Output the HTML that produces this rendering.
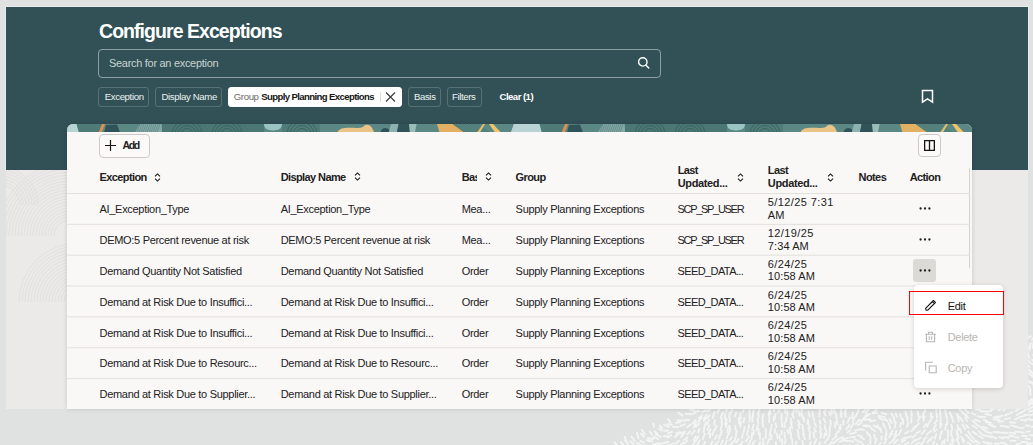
<!DOCTYPE html>
<html><head><meta charset="utf-8">
<style>
*{box-sizing:border-box;margin:0;padding:0}
html,body{width:1033px;height:445px;overflow:hidden;background:#e0e2e1;font-family:"Liberation Sans",sans-serif;position:relative}
.a{position:absolute}
.t{position:absolute;white-space:nowrap;line-height:1}
#teal{left:6px;top:7px;width:1022px;height:163px;background:#315156;box-shadow:0 0 0 1px rgba(255,255,255,.3)}
#light{left:6px;top:170px;width:1022px;height:239px;background:#ebeae8}
.title{left:99px;top:21.6px;font-size:19.5px;font-weight:bold;color:#fff;letter-spacing:-0.95px}
#search{left:98px;top:49px;width:563px;height:29px;border:1px solid rgba(255,255,255,.45);border-radius:4px}
.ph{left:109px;top:57.7px;font-size:11px;color:#c9d3d3;letter-spacing:-0.3px}
.chip{position:absolute;top:87px;height:20px;border:1px solid rgba(255,255,255,.18);border-radius:3px}
.ct{top:91.9px;font-size:9.6px;color:#edf1f1;letter-spacing:-0.35px}
#card{left:67px;top:123.5px;width:905px;height:285px;background:#f9f8f6;border-radius:6px 6px 0 0;overflow:hidden;box-shadow:0 0 5px rgba(0,0,0,.14)}
.btn{position:absolute;border:1px solid #cdcac6;border-radius:4px;background:#fbfaf9}
.h{font-size:11px;font-weight:bold;color:#22201d;letter-spacing:-0.6px}
.d{font-size:11px;color:#22201d;letter-spacing:-0.3px}
.sort{position:absolute;width:7px;height:9px}
.dots{position:absolute;width:12px;height:3px}
</style></head><body>
<div id="teal" class="a"></div>
<div id="light" class="a"></div>
<svg class="a" style="left:0;top:0" width="1033" height="445" viewBox="0 0 1033 445">
<defs><clipPath id="lc"><rect x="6" y="170" width="1022" height="239"/></clipPath><clipPath id="dc"><path d="M0 409H1033V445H0Z M1028 300H1033V409H1028Z"/></clipPath></defs>
<g clip-path="url(#dc)"><path d="M1028.3 406.4l2.9 -2.9M1032.5 403.7l1.8 -3.1M1036.2 406.6l4.6 -3.7M689.9 409.5l4.1 0.7M694.9 411.5l4.3 -0.8M702.2 411.8l4.3 -1.4M708.0 411.5l3.0 -3.8M717.5 412.4l2.0 -3.4M726.1 411.7l1.6 -4.0M731.2 412.4l1.1 -3.6M742.8 411.9l1.6 -4.6M749.2 411.7l1.0 -4.9M753.1 412.5l0.8 -4.6M758.0 413.7l1.7 -4.9M770.3 414.1l-0.1 -5.6M773.8 411.1l0.3 -3.7M778.3 412.7l2.0 -5.1M785.2 412.9l-0.2 -5.1M793.0 413.3l1.1 -3.9M796.3 412.3l1.5 -5.8M801.7 411.6l-0.1 -4.8M820.0 411.0l-0.6 -3.5M825.3 411.4l0.4 -3.6M832.2 413.2l-1.0 -3.6M834.8 412.6l-1.3 -4.0M841.6 413.9l-0.9 -5.5M845.2 413.6l0.7 -4.9M857.7 410.7l2.2 -3.0M862.7 412.0l2.7 -2.5M865.7 412.7l3.1 -3.5M873.0 412.4l3.5 -2.3M924.7 407.7l0.4 4.0M936.4 406.9l-0.2 4.7M940.3 406.9l-0.4 5.2M945.0 408.2l0.8 5.2M959.2 409.2l3.2 2.6M964.2 409.0l4.3 3.8M976.2 409.1l3.9 0.4M980.6 411.3l5.9 0.2M986.9 411.9l4.2 -1.0M991.3 409.9l4.4 -1.7M998.4 410.5l2.9 -2.0M1003.6 410.4l2.4 -2.7M1015.5 411.0l4.6 -2.7M1022.0 412.2l3.8 -2.4M1028.1 409.4l4.7 -2.6M1029.5 411.7l5.4 -1.8M1038.6 411.2l3.7 -0.9M678.2 412.5l4.1 3.2M685.8 413.9l4.8 0.4M690.1 414.2l5.6 -1.4M699.0 417.9l2.8 -2.2M704.0 418.8l2.6 -3.8M707.1 418.4l2.4 -3.2M712.6 417.9l1.9 -5.6M720.6 417.7l2.3 -5.2M725.0 418.9l-0.1 -4.7M729.3 417.3l0.4 -4.6M734.9 416.4l1.3 -4.1M740.8 418.8l-0.6 -5.6M749.8 418.7l-0.2 -5.8M752.6 417.5l0.8 -5.9M758.7 416.8l-0.6 -4.2M762.3 418.4l1.2 -4.0M769.1 416.4l-0.3 -4.8M774.5 419.6l1.0 -5.6M781.5 419.6l0.1 -5.9M787.3 415.9l0.1 -5.3M793.6 417.6l-1.3 -4.0M799.6 415.8l-0.7 -4.6M803.1 418.8l-1.8 -5.7M809.7 416.6l-1.2 -4.8M812.7 415.7l0.0 -4.0M819.4 416.8l0.1 -5.8M825.6 415.4l-1.7 -3.6M830.5 415.3l-1.3 -3.9M836.7 419.2l-0.9 -5.3M841.4 417.3l-0.5 -4.4M845.6 417.0l-0.8 -5.9M852.0 418.3l1.1 -5.6M856.1 416.0l1.9 -4.1M863.4 418.5l3.7 -4.3M864.7 417.4l4.9 -3.1M872.6 413.2l4.5 -0.4M878.4 416.0l5.9 0.9M881.7 412.8l4.6 1.5M891.4 413.7l2.8 4.3M895.6 413.6l1.6 3.2M900.0 414.3l1.9 4.7M905.6 411.5l0.8 5.0M911.2 410.9l0.5 4.8M917.6 411.4l1.0 4.9M923.9 412.0l-1.3 5.7M931.1 412.9l-0.1 4.1M936.6 413.7l0.5 4.2M940.3 413.4l0.3 4.5M946.1 414.8l1.2 3.9M949.8 412.3l2.1 4.8M956.8 414.0l2.8 3.8M962.2 412.5l4.4 3.4M965.7 414.3l2.4 3.5M971.6 413.0l3.7 1.6M977.8 416.3l3.7 1.0M981.4 417.0l3.9 -0.1M985.4 414.1l5.7 1.0M993.6 417.5l5.7 -1.1M997.3 417.8l4.9 -2.1M1005.1 415.4l4.1 -1.8M1008.8 414.0l3.7 -2.0M1016.8 415.0l5.1 -3.0M1019.7 417.0l5.4 -1.4M1024.5 415.0l4.4 -0.1M1030.1 415.6l5.2 -2.3M1036.5 416.9l5.2 -1.4M667.9 419.0l2.5 3.5M676.0 422.7l4.1 -0.5M677.8 420.3l5.3 0.3M683.9 420.5l5.0 -0.6M692.3 423.8l3.4 -3.9M698.2 421.5l3.2 -3.7M704.0 421.1l1.9 -3.6M707.3 424.4l1.6 -4.7M714.3 424.8l0.6 -4.7M721.8 424.1l-0.2 -6.0M725.0 424.4l1.8 -5.3M729.8 421.6l-0.2 -3.8M738.9 423.7l-0.0 -5.8M743.6 422.3l0.8 -4.1M749.5 421.4l0.6 -5.0M752.6 421.9l-0.4 -3.8M758.3 423.4l-0.6 -5.1M762.9 422.4l-0.6 -5.2M769.1 422.1l0.2 -5.5M773.7 421.1l0.1 -4.5M781.5 420.8l0.2 -3.9M785.9 421.8l0.5 -4.2M791.7 422.9l-0.9 -4.3M799.9 424.5l-1.8 -4.0M804.0 421.1l-0.2 -3.5M808.5 424.0l-0.6 -4.5M814.3 420.8l-1.0 -3.4M820.5 423.9l-0.9 -3.6M825.2 422.3l-1.5 -3.6M830.9 424.1l-0.6 -3.7M837.6 424.3l-0.7 -3.9M843.3 424.8l-0.0 -4.7M847.6 422.7l2.3 -5.3M852.8 421.7l2.1 -5.1M855.8 424.0l3.6 -4.3M860.4 421.5l3.9 -2.8M864.9 419.8l5.3 -0.6M870.0 421.2l5.3 -0.8M879.1 417.8l4.4 2.3M884.5 418.1l3.1 3.3M889.7 419.1l2.1 4.1M893.7 418.8l1.8 4.4M903.0 419.3l0.1 4.6M907.5 417.0l-0.2 3.8M911.5 417.9l-0.3 4.8M920.2 416.4l-2.4 4.8M924.7 416.4l-1.3 4.6M932.8 416.7l-3.1 4.7M937.0 420.1l-2.2 3.3M940.7 419.4l-0.5 5.8M947.1 420.4l0.1 3.7M951.6 416.4l1.8 5.5M957.8 416.7l1.0 4.7M960.0 417.6l2.8 3.9M965.2 417.5l1.9 3.4M972.8 420.7l2.8 2.7M975.1 419.6l4.7 2.0M983.7 419.7l4.5 2.1M985.9 422.0l5.0 0.9M993.7 419.5l6.0 0.2M998.2 421.9l4.6 -0.7M1004.8 419.4l5.4 -1.5M1010.1 422.3l5.0 0.4M1015.1 419.1l3.4 -1.1M1021.1 419.9l4.7 0.7M1024.6 420.1l4.9 -1.4M1030.1 420.0l3.8 -0.2M1035.9 421.0l5.0 -0.3M653.3 423.4l0.8 3.5M659.9 425.6l2.4 2.6M664.0 424.7l4.9 2.2M667.9 424.1l4.0 0.6M673.2 426.8l5.2 0.3M680.6 425.9l4.6 -1.7M686.9 427.2l3.5 -2.3M693.5 427.4l2.7 -5.0M695.5 426.7l4.1 -3.5M704.1 428.0l1.8 -5.4M707.5 430.0l1.9 -4.7M714.8 430.1l1.7 -4.4M720.7 429.7l1.2 -4.4M726.0 427.2l0.7 -4.0M730.1 429.6l-0.5 -3.8M735.6 429.9l-0.3 -4.3M740.3 426.8l0.7 -5.2M748.6 428.8l0.5 -3.6M752.2 429.9l1.5 -5.3M756.4 430.2l1.7 -5.5M763.3 426.7l-0.8 -3.7M771.0 429.8l0.7 -5.0M776.5 427.0l-1.0 -3.6M782.4 426.9l-0.7 -4.2M784.7 427.1l-0.2 -4.2M792.1 428.2l-1.3 -5.8M799.5 428.2l-1.2 -3.4M803.2 429.2l-0.9 -4.3M810.1 427.3l-2.9 -4.9M816.1 426.2l-1.6 -3.1M820.9 429.6l-0.8 -3.4M825.3 429.1l-0.6 -3.9M829.5 429.4l0.8 -4.1M835.1 427.5l0.2 -5.2M839.2 428.2l1.5 -3.4M846.4 429.3l2.8 -4.2M850.5 428.0l3.2 -4.8M857.9 425.2l3.4 -2.2M862.9 425.6l4.4 0.9M865.6 425.1l4.6 1.4M873.7 425.3l3.6 2.5M877.4 425.1l2.5 4.5M883.1 423.2l2.1 5.0M888.7 423.1l1.6 5.5M895.9 422.7l-1.3 5.1M900.9 422.6l-0.7 4.1M908.2 422.6l-1.3 4.1M916.4 425.8l-3.0 2.3M919.0 423.4l-4.2 4.2M926.2 424.2l-2.5 3.1M928.7 422.7l-1.5 4.2M935.8 424.9l-2.5 4.6M941.7 424.0l-1.3 3.6M946.0 424.1l-0.7 5.7M951.4 424.8l0.9 4.5M957.4 424.8l1.0 5.3M962.6 424.5l2.6 4.4M966.1 425.1l2.4 2.9M972.5 425.5l4.3 2.7M976.5 424.6l4.4 2.4M983.5 426.8l3.5 1.9M989.0 424.4l4.2 2.2M991.8 425.5l3.6 1.4M1000.9 425.8l3.7 0.6M1004.3 426.4l4.7 0.9M1011.2 425.4l4.3 1.4M1014.2 426.2l4.3 1.1M1019.3 428.1l4.4 -0.4M1025.8 425.5l3.5 0.3M1031.5 426.7l4.4 0.1M1035.5 426.5l5.8 0.9M641.9 429.8l2.7 4.4M649.6 431.5l2.3 2.8M654.6 431.5l3.0 2.4M659.2 428.4l2.7 2.3M664.2 430.6l3.8 -0.1M667.9 433.3l4.1 -1.4M676.2 433.3l3.7 -1.2M680.1 433.8l4.6 -2.3M687.2 434.3l2.8 -2.8M691.5 434.1l3.2 -3.3M698.2 432.5l1.1 -3.9M703.6 432.0l0.8 -4.6M708.4 433.7l2.1 -4.4M712.4 435.1l1.3 -4.5M720.8 435.0l0.8 -4.4M727.3 432.3l1.1 -5.0M728.6 434.3l2.0 -4.8M735.8 435.8l1.0 -4.7M743.6 432.2l1.0 -5.2M746.9 435.1l0.8 -4.3M753.3 434.6l0.6 -4.0M758.6 434.5l0.1 -5.6M765.9 433.5l-0.2 -4.8M769.5 435.9l1.0 -5.0M774.8 432.9l0.1 -4.2M781.5 434.4l0.1 -3.6M788.5 433.4l-1.0 -3.5M790.5 433.1l-0.9 -5.7M798.7 435.5l-1.1 -5.7M804.0 434.6l-1.1 -5.1M810.0 432.8l-1.5 -4.9M816.0 431.7l-1.8 -3.5M820.9 435.7l-0.6 -5.1M826.4 435.1l-0.2 -4.9M829.5 433.3l0.3 -4.3M835.7 434.8l1.8 -3.2M838.4 432.4l2.5 -4.9M847.3 432.4l2.8 -2.1M850.0 433.9l5.8 -1.3M855.2 430.7l4.9 -1.5M860.4 429.2l3.5 0.6M866.4 431.9l2.3 2.9M870.9 428.0l4.2 3.2M880.7 428.5l0.5 3.6M886.3 430.3l0.0 5.3M892.8 430.4l-2.7 3.8M896.4 430.9l-1.8 5.0M901.3 429.6l-2.4 5.0M908.4 431.4l-3.3 2.1M914.6 428.2l-3.2 3.0M919.9 431.2l-3.3 2.1M925.2 430.2l-3.5 3.7M931.2 430.7l-4.4 3.9M936.5 429.3l-2.5 2.6M942.1 430.8l-1.7 4.0M947.9 430.3l-0.0 5.0M951.4 430.8l-0.3 4.4M956.4 430.5l2.0 5.1M959.8 428.4l1.5 4.3M968.4 431.5l1.8 3.1M972.7 431.6l4.0 2.8M978.6 430.9l3.7 3.7M981.9 428.4l4.0 2.8M986.0 431.7l5.6 1.6M993.6 431.9l4.6 0.7M997.4 431.8l5.3 1.3M1002.1 432.5l5.4 0.5M1009.5 432.5l5.6 1.2M1015.4 431.8l4.0 0.1M1019.6 431.9l4.3 0.9M1026.2 431.7l3.9 -0.3M1034.1 430.7l3.7 0.7M1038.2 430.1l5.0 0.1M624.7 436.9l1.5 3.9M631.5 436.7l3.1 4.2M637.0 432.8l1.6 5.7M641.0 433.6l2.8 3.1M647.8 438.2l5.5 0.8M653.3 436.7l4.6 2.2M655.8 434.5l4.9 2.3M663.7 436.3l5.0 -0.2M667.6 437.3l3.6 -2.0M674.9 437.0l3.1 -2.7M681.1 437.1l3.3 -4.2M684.1 440.0l3.2 -2.5M693.6 440.2l1.8 -3.4M695.4 441.1l3.0 -4.8M702.8 439.0l2.0 -5.2M709.8 437.6l0.4 -4.0M714.9 438.9l1.9 -3.3M719.2 438.6l0.8 -3.8M726.8 438.2l1.2 -3.7M729.6 440.1l2.3 -3.0M734.6 441.1l1.3 -5.0M742.1 438.2l0.7 -4.1M745.8 441.4l3.4 -4.9M751.7 439.0l0.3 -5.7M760.0 439.1l-0.1 -5.9M765.9 438.3l-0.3 -3.8M771.2 439.1l0.3 -4.0M777.6 438.3l-0.8 -4.9M780.1 440.7l-0.7 -5.2M785.0 437.8l-0.5 -5.0M791.2 438.3l-0.2 -5.0M799.5 439.2l-1.4 -3.7M804.9 439.1l-2.0 -4.9M809.6 439.1l0.3 -5.6M814.3 437.9l-0.7 -5.7M820.5 438.0l0.9 -3.9M824.0 437.8l0.9 -4.3M827.7 439.2l1.7 -4.3M832.4 439.7l4.2 -3.7M838.8 438.8l4.0 -2.0M842.4 439.3l5.6 -1.7M850.2 437.5l4.8 -0.8M857.9 435.4l3.8 0.9M861.0 437.3l3.0 2.0M869.0 434.2l1.6 3.2M874.0 434.6l1.6 5.0M881.6 436.1l-0.3 3.6M885.9 435.0l-0.9 4.1M892.3 433.7l-3.3 3.7M896.6 435.1l-3.1 4.4M905.1 437.4l-3.6 2.6M911.0 436.3l-4.2 1.6M915.7 435.0l-3.2 2.6M920.7 437.8l-5.0 2.3M926.6 437.1l-2.6 2.5M932.5 437.0l-2.3 3.4M936.2 434.2l-1.4 4.6M940.5 435.3l-0.6 3.5M948.2 435.2l-0.6 5.8M951.7 435.9l2.1 5.3M956.5 433.7l2.1 4.8M961.2 436.7l3.0 4.1M966.0 434.6l4.1 4.2M971.4 436.2l2.6 2.7M979.0 436.0l3.6 2.2M982.8 435.0l3.6 1.1M987.1 436.0l4.1 1.2M991.3 436.1l5.2 2.2M999.4 436.9l3.7 1.5M1003.9 436.7l4.9 1.1M1009.3 435.5l4.0 0.8M1015.3 437.2l3.5 0.3M1022.0 435.7l4.9 0.6M1025.5 438.6l4.2 0.7M1029.8 435.2l5.7 0.2M1035.5 436.4l4.6 0.3M614.6 442.3l2.8 4.1M621.0 442.1l3.2 3.9M625.0 440.4l3.5 4.0M630.4 441.3l3.4 2.9M637.0 442.8l4.2 2.2M640.6 440.7l3.3 2.0M646.5 440.3l5.7 1.2M653.0 444.5l5.7 -1.3M658.1 444.9l3.2 -1.5M662.9 443.2l5.6 -1.4M669.1 445.8l4.1 -2.5M675.5 443.4l3.5 -2.7M679.5 446.1l3.7 -3.6M684.4 443.7l3.0 -3.4M691.5 446.4l3.5 -4.8M696.8 445.6l2.9 -5.3M703.2 445.5l1.9 -3.4M710.5 446.0l1.9 -4.4M714.5 445.1l4.1 -3.7M721.2 443.9l1.7 -3.5M725.2 444.3l1.6 -3.6M730.4 444.4l3.3 -2.9M736.2 442.5l2.7 -3.6M740.9 444.8l1.7 -3.1M748.4 445.2l1.9 -4.8M752.4 444.5l2.2 -3.5M758.1 446.7l2.1 -4.5M762.7 443.8l0.7 -5.4M767.4 443.4l1.9 -4.4M776.0 445.6l-0.1 -3.7M782.1 444.4l-0.0 -5.3M784.7 443.4l0.9 -3.6M792.5 444.2l-0.3 -4.6M795.1 446.5l1.3 -4.8M803.2 445.0l-0.8 -4.0M809.5 445.9l1.5 -4.0M814.3 444.0l2.0 -4.6M818.8 446.2l1.5 -3.8M824.5 443.0l2.7 -3.3M829.2 445.3l2.5 -3.2M833.3 443.3l4.4 -4.0M839.5 441.8l4.5 -1.8M844.7 440.5l3.8 0.5M850.0 441.0l3.9 0.9M854.7 439.3l4.5 2.6M861.1 441.8l2.0 3.1M870.5 438.7l-0.3 4.6M876.4 439.0l-1.3 4.2M880.9 442.9l-2.8 2.9M886.5 439.3l-2.0 4.2M894.1 439.7l-4.5 3.6M897.8 439.7l-3.6 3.5M905.6 439.8l-4.1 2.4M908.6 442.6l-4.0 1.9M914.9 440.2l-3.2 3.1M919.0 442.7l-3.6 2.3M924.0 441.2l-3.2 3.0M929.8 438.9l-2.2 3.7M934.3 441.4l-1.7 3.9M943.0 440.9l-1.7 5.4M944.9 439.8l-0.7 3.5M951.9 439.7l0.6 4.5M956.5 439.0l2.6 5.0M962.3 439.5l1.4 3.5M967.4 442.4l3.1 1.9M970.5 440.0l3.3 2.6M974.9 440.7l4.6 2.2M983.3 442.0l5.1 1.5M987.6 443.0l4.3 0.5M994.7 443.5l4.2 0.1M1000.6 442.8l3.6 0.3M1003.1 442.9l3.7 1.5M1010.4 440.6l5.2 0.4M1016.4 444.2l4.1 -0.8M1021.9 442.0l5.8 0.3M1027.0 444.3l5.0 -1.0M1030.0 443.8l4.5 -1.0M1038.9 442.4l4.6 -2.8M608.4 448.1l2.6 2.9M613.9 447.3l2.9 3.9M618.3 447.0l3.7 3.4M626.4 448.5l3.4 1.7M630.3 446.0l3.2 1.7M634.5 448.4l4.5 0.8M640.6 447.7l4.4 0.3M644.4 445.2l5.8 1.6M649.9 449.1l5.9 -0.5M656.3 448.9l4.2 -1.8M663.0 447.1l5.4 -2.0M669.5 451.3l4.0 -3.2M673.9 447.4l3.1 -1.8M681.8 448.4l3.1 -2.5M687.2 450.7l3.3 -2.1M693.0 450.7l2.7 -3.4M698.2 448.9l3.1 -3.1M702.2 451.0l2.5 -3.3M707.5 450.1l4.5 -3.2M714.7 451.1l3.9 -2.7M717.7 449.2l2.8 -4.1M724.8 447.8l4.0 -2.4M728.5 448.0l2.7 -3.8M735.7 447.7l4.5 -3.4M742.0 449.1l3.2 -2.7M746.6 449.3l2.9 -3.3M752.6 451.7l3.1 -4.9M756.9 449.9l2.5 -4.2M762.3 448.3l1.9 -3.9M770.1 451.9l3.5 -4.5M777.1 451.2l0.5 -5.5M781.1 450.5l1.2 -4.1M788.1 450.5l0.4 -5.1M791.3 451.3l0.2 -3.6M797.8 449.6l0.9 -3.6M802.0 450.5l1.0 -4.4M808.5 449.5l0.5 -3.8M814.4 449.7l2.3 -3.0M817.6 448.6l1.7 -4.5M823.4 449.5l3.1 -2.6M827.2 449.8l3.6 -3.4M833.4 446.6l4.6 -0.6M839.0 448.8l5.4 0.0M847.7 447.5l2.6 2.7M849.9 444.7l4.4 4.0M857.4 444.4l3.3 4.3M862.2 445.7l0.5 3.5M868.0 444.6l-0.3 5.3M877.6 446.1l-3.1 4.8M883.2 448.2l-3.0 2.5M887.1 447.7l-4.4 2.8M891.9 446.4l-4.9 2.2M899.2 444.5l-3.7 3.4M904.0 448.6l-3.6 1.2M909.9 445.9l-3.3 2.2M915.5 446.8l-2.2 3.0M918.4 447.8l-2.9 2.7M924.1 446.7l-1.9 4.0M932.3 445.9l-2.7 4.5M937.0 443.9l-0.3 4.3M939.8 446.8l1.4 5.3M944.1 446.7l1.2 5.1M950.4 444.0l2.1 5.2M957.3 447.0l2.4 2.8M959.3 448.2l4.1 2.8M965.0 445.8l3.3 3.3M971.6 446.4l2.9 2.0M976.6 444.5l3.4 3.1M980.2 445.8l5.0 1.5M987.1 447.4l3.9 1.3M992.6 450.1l6.0 -0.5M998.5 448.4l5.5 1.3M1004.8 448.7l4.4 -0.3M1010.3 449.5l5.8 0.0M1014.1 449.4l5.3 -0.7M1021.2 448.0l4.7 -1.2M1024.6 447.4l4.3 -0.1M1032.2 448.6l3.4 -2.3M1037.3 447.2l3.3 -1.3M1026.3 339.0l4.4 -2.8M1031.9 339.6l2.6 -3.0M1029.0 347.9l1.6 -4.9M1032.6 347.8l1.0 -5.8M1029.4 350.6l0.7 -5.5M1035.5 350.7l-0.8 -3.7M1029.4 357.9l-1.7 -5.4M1035.7 358.3l-2.5 -3.2M1030.6 363.5l-3.1 -4.0M1035.3 362.7l-3.2 -2.9M1029.4 367.0l-2.5 -2.6M1036.3 366.7l-3.9 -2.7M1031.6 372.0l-3.6 -2.9M1034.5 374.6l-4.0 -2.9M1032.9 376.8l-3.9 -3.2M1036.1 377.5l-2.9 -2.3M1030.2 383.1l-3.5 -4.2M1034.1 385.6l-2.6 -3.8M1030.5 390.6l-1.7 -4.6M1035.2 390.5l-1.4 -4.1M1030.5 395.2l-0.5 -5.3M1034.6 396.7l0.5 -4.2M1029.2 402.9l2.2 -4.1M1032.1 401.8l2.4 -5.3M1027.1 404.5l2.6 -3.9M1032.7 407.0l3.5 -2.7" stroke="#f3f4f3" stroke-width="1.9" stroke-linecap="round" fill="none"/></g>
<g fill="none" stroke="#dfdedb" stroke-width="0.9" opacity="0.8" clip-path="url(#lc)"><path d="M54 236A16 16 0 0 1 86 236"/><path d="M51 236A19 19 0 0 1 89 236"/><path d="M48 236A22 22 0 0 1 92 236"/><path d="M45 236A25 25 0 0 1 95 236"/><path d="M42 236A28 28 0 0 1 98 236"/><path d="M39 236A31 31 0 0 1 101 236"/><path d="M36 236A34 34 0 0 1 104 236"/><path d="M33 236A37 37 0 0 1 107 236"/><path d="M30 236A40 40 0 0 1 110 236"/><path d="M27 236A43 43 0 0 1 113 236"/><path d="M24 236A46 46 0 0 1 116 236"/><path d="M21 236A49 49 0 0 1 119 236"/><path d="M18 236A52 52 0 0 1 122 236"/><path d="M15 236A55 55 0 0 1 125 236"/><path d="M12 236A58 58 0 0 1 128 236"/><path d="M9 236A61 61 0 0 1 131 236"/><path d="M6 236A64 64 0 0 1 134 236"/><path d="M3 236A67 67 0 0 1 137 236"/><path d="M0 236A70 70 0 0 1 140 236"/><path d="M-3 236A73 73 0 0 1 143 236"/><path d="M64 302A14 14 0 0 1 92 302"/><path d="M61 302A17 17 0 0 1 95 302"/><path d="M58 302A20 20 0 0 1 98 302"/><path d="M55 302A23 23 0 0 1 101 302"/><path d="M52 302A26 26 0 0 1 104 302"/><path d="M49 302A29 29 0 0 1 107 302"/><path d="M46 302A32 32 0 0 1 110 302"/><path d="M43 302A35 35 0 0 1 113 302"/><path d="M40 302A38 38 0 0 1 116 302"/><path d="M37 302A41 41 0 0 1 119 302"/><path d="M34 302A44 44 0 0 1 122 302"/><path d="M31 302A47 47 0 0 1 125 302"/><path d="M28 302A50 50 0 0 1 128 302"/><path d="M25 302A53 53 0 0 1 131 302"/><path d="M22 302A56 56 0 0 1 134 302"/><path d="M19 302A59 59 0 0 1 137 302"/><path d="M-20 205A20 20 0 0 1 20 205"/><path d="M-23 205A23 23 0 0 1 23 205"/><path d="M-26 205A26 26 0 0 1 26 205"/><path d="M-29 205A29 29 0 0 1 29 205"/><path d="M-32 205A32 32 0 0 1 32 205"/><path d="M-35 205A35 35 0 0 1 35 205"/><path d="M-38 205A38 38 0 0 1 38 205"/></g></svg>
<div class="t title">Configure Exceptions</div>
<div id="search" class="a"></div>
<div class="t ph">Search for an exception</div>
<svg class="a" style="left:637px;top:56px" width="14" height="14" viewBox="0 0 14 14"><circle cx="5.8" cy="5.9" r="4.2" fill="none" stroke="#fff" stroke-width="1.4"/><line x1="8.8" y1="8.9" x2="11.8" y2="11.9" stroke="#fff" stroke-width="1.4" stroke-linecap="round"/></svg>
<div class="chip" style="left:98px;width:51px"></div>
<div class="t ct" style="left:104.7px">Exception</div>
<div class="chip" style="left:155px;width:67px"></div>
<div class="t ct" style="left:161.4px">Display Name</div>
<div class="chip" style="left:228px;width:174px;background:#fff;border-color:#fff"></div>
<div class="t ct" style="left:233.7px;color:#6f6c69">Group</div>
<div class="t ct" style="left:261.2px;color:#161513;font-weight:bold;letter-spacing:-0.62px">Supply Planning Exceptions</div>
<div class="a" style="left:379.5px;top:92px;width:1px;height:10px;background:#e2dfdb"></div>
<svg class="a" style="left:385px;top:92px" width="11" height="10" viewBox="0 0 11 10"><path d="M1 0.5L10 9.5M10 0.5L1 9.5" stroke="#3a3835" stroke-width="1.1"/></svg>
<div class="chip" style="left:408px;width:33px"></div>
<div class="t ct" style="left:413.9px">Basis</div>
<div class="chip" style="left:446.5px;width:35px"></div>
<div class="t ct" style="left:451.9px">Filters</div>
<div class="t ct" style="left:499.6px;color:#fff;font-weight:bold;letter-spacing:-0.55px">Clear (1)</div>
<svg class="a" style="left:921px;top:89px" width="13" height="15" viewBox="0 0 13 15"><path d="M1.5 1.5H11.5V13.2L6.5 9.8L1.5 13.2Z" fill="none" stroke="#fff" stroke-width="1.5" stroke-linejoin="miter"/></svg>
<div id="card" class="a"><svg class="a" style="left:0;top:0" width="905" height="8.5" viewBox="0 0 905 8.5"><g><rect x="0" y="0" width="463" height="8.5" fill="#5b8884"/><polygon points="-16,0 9.6,0 12,8.5 -19,8.5" fill="#b9d3d4"/><polygon points="447,0 472.6,0 475,8.5 444,8.5" fill="#b9d3d4"/><polygon points="9.6,0 35,0 31.7,8.5 12,8.5" fill="#4f7b77"/><polygon points="35,0 38,0 34.7,8.5 31.7,8.5" fill="#e58d4c"/><polygon points="37,8.5 39,1 50,0.5 53,8.5" fill="#30535a"/><polygon points="73,0 95,0 95,8.5 68,8.5" fill="#86a9a6"/><line x1="73" y1="0" x2="70" y2="8.5" stroke="#5d8985" stroke-width="0.8"/><line x1="75" y1="0" x2="72" y2="8.5" stroke="#5d8985" stroke-width="0.8"/><line x1="77" y1="0" x2="74" y2="8.5" stroke="#5d8985" stroke-width="0.8"/><line x1="79" y1="0" x2="76" y2="8.5" stroke="#5d8985" stroke-width="0.8"/><line x1="81" y1="0" x2="78" y2="8.5" stroke="#5d8985" stroke-width="0.8"/><line x1="83" y1="0" x2="80" y2="8.5" stroke="#5d8985" stroke-width="0.8"/><line x1="85" y1="0" x2="82" y2="8.5" stroke="#5d8985" stroke-width="0.8"/><line x1="87" y1="0" x2="84" y2="8.5" stroke="#5d8985" stroke-width="0.8"/><line x1="89" y1="0" x2="86" y2="8.5" stroke="#5d8985" stroke-width="0.8"/><line x1="91" y1="0" x2="88" y2="8.5" stroke="#5d8985" stroke-width="0.8"/><line x1="93" y1="0" x2="90" y2="8.5" stroke="#5d8985" stroke-width="0.8"/><rect x="95" y="0" width="102" height="8.5" fill="#4f7c78"/><line x1="95.0" y1="0" x2="95.8" y2="8.5" stroke="#45716d" stroke-width="0.6"/><line x1="96.6" y1="0" x2="97.4" y2="8.5" stroke="#45716d" stroke-width="0.6"/><line x1="98.2" y1="0" x2="99.0" y2="8.5" stroke="#45716d" stroke-width="0.6"/><line x1="99.8" y1="0" x2="100.6" y2="8.5" stroke="#45716d" stroke-width="0.6"/><line x1="101.4" y1="0" x2="102.2" y2="8.5" stroke="#45716d" stroke-width="0.6"/><line x1="103.0" y1="0" x2="103.8" y2="8.5" stroke="#45716d" stroke-width="0.6"/><line x1="104.6" y1="0" x2="105.4" y2="8.5" stroke="#45716d" stroke-width="0.6"/><line x1="106.2" y1="0" x2="107.0" y2="8.5" stroke="#45716d" stroke-width="0.6"/><line x1="107.8" y1="0" x2="108.6" y2="8.5" stroke="#45716d" stroke-width="0.6"/><line x1="109.4" y1="0" x2="110.2" y2="8.5" stroke="#45716d" stroke-width="0.6"/><line x1="111.0" y1="0" x2="111.8" y2="8.5" stroke="#45716d" stroke-width="0.6"/><line x1="112.6" y1="0" x2="113.4" y2="8.5" stroke="#45716d" stroke-width="0.6"/><line x1="114.2" y1="0" x2="115.0" y2="8.5" stroke="#45716d" stroke-width="0.6"/><line x1="115.8" y1="0" x2="116.6" y2="8.5" stroke="#45716d" stroke-width="0.6"/><line x1="117.4" y1="0" x2="118.2" y2="8.5" stroke="#45716d" stroke-width="0.6"/><line x1="119.0" y1="0" x2="119.8" y2="8.5" stroke="#45716d" stroke-width="0.6"/><line x1="120.6" y1="0" x2="121.4" y2="8.5" stroke="#45716d" stroke-width="0.6"/><line x1="122.2" y1="0" x2="123.0" y2="8.5" stroke="#45716d" stroke-width="0.6"/><line x1="123.8" y1="0" x2="124.6" y2="8.5" stroke="#45716d" stroke-width="0.6"/><line x1="125.4" y1="0" x2="126.2" y2="8.5" stroke="#45716d" stroke-width="0.6"/><line x1="127.0" y1="0" x2="127.8" y2="8.5" stroke="#45716d" stroke-width="0.6"/><line x1="128.6" y1="0" x2="129.4" y2="8.5" stroke="#45716d" stroke-width="0.6"/><line x1="130.2" y1="0" x2="131.0" y2="8.5" stroke="#45716d" stroke-width="0.6"/><line x1="131.8" y1="0" x2="132.6" y2="8.5" stroke="#45716d" stroke-width="0.6"/><line x1="133.4" y1="0" x2="134.2" y2="8.5" stroke="#45716d" stroke-width="0.6"/><line x1="135.0" y1="0" x2="135.8" y2="8.5" stroke="#45716d" stroke-width="0.6"/><line x1="136.6" y1="0" x2="137.4" y2="8.5" stroke="#45716d" stroke-width="0.6"/><line x1="138.2" y1="0" x2="139.0" y2="8.5" stroke="#45716d" stroke-width="0.6"/><line x1="139.8" y1="0" x2="140.6" y2="8.5" stroke="#45716d" stroke-width="0.6"/><line x1="141.4" y1="0" x2="142.2" y2="8.5" stroke="#45716d" stroke-width="0.6"/><line x1="143.0" y1="0" x2="143.8" y2="8.5" stroke="#45716d" stroke-width="0.6"/><line x1="144.6" y1="0" x2="145.4" y2="8.5" stroke="#45716d" stroke-width="0.6"/><line x1="146.2" y1="0" x2="147.0" y2="8.5" stroke="#45716d" stroke-width="0.6"/><line x1="147.8" y1="0" x2="148.6" y2="8.5" stroke="#45716d" stroke-width="0.6"/><line x1="149.4" y1="0" x2="150.2" y2="8.5" stroke="#45716d" stroke-width="0.6"/><line x1="151.0" y1="0" x2="151.8" y2="8.5" stroke="#45716d" stroke-width="0.6"/><line x1="152.6" y1="0" x2="153.4" y2="8.5" stroke="#45716d" stroke-width="0.6"/><line x1="154.2" y1="0" x2="155.0" y2="8.5" stroke="#45716d" stroke-width="0.6"/><line x1="155.8" y1="0" x2="156.6" y2="8.5" stroke="#45716d" stroke-width="0.6"/><line x1="157.4" y1="0" x2="158.2" y2="8.5" stroke="#45716d" stroke-width="0.6"/><line x1="159.0" y1="0" x2="159.8" y2="8.5" stroke="#45716d" stroke-width="0.6"/><line x1="160.6" y1="0" x2="161.4" y2="8.5" stroke="#45716d" stroke-width="0.6"/><line x1="162.2" y1="0" x2="163.0" y2="8.5" stroke="#45716d" stroke-width="0.6"/><line x1="163.8" y1="0" x2="164.6" y2="8.5" stroke="#45716d" stroke-width="0.6"/><line x1="165.4" y1="0" x2="166.2" y2="8.5" stroke="#45716d" stroke-width="0.6"/><line x1="167.0" y1="0" x2="167.8" y2="8.5" stroke="#45716d" stroke-width="0.6"/><line x1="168.6" y1="0" x2="169.4" y2="8.5" stroke="#45716d" stroke-width="0.6"/><line x1="170.2" y1="0" x2="171.0" y2="8.5" stroke="#45716d" stroke-width="0.6"/><line x1="171.8" y1="0" x2="172.6" y2="8.5" stroke="#45716d" stroke-width="0.6"/><line x1="173.4" y1="0" x2="174.2" y2="8.5" stroke="#45716d" stroke-width="0.6"/><line x1="175.0" y1="0" x2="175.8" y2="8.5" stroke="#45716d" stroke-width="0.6"/><line x1="176.6" y1="0" x2="177.4" y2="8.5" stroke="#45716d" stroke-width="0.6"/><line x1="178.2" y1="0" x2="179.0" y2="8.5" stroke="#45716d" stroke-width="0.6"/><line x1="179.8" y1="0" x2="180.6" y2="8.5" stroke="#45716d" stroke-width="0.6"/><line x1="181.4" y1="0" x2="182.2" y2="8.5" stroke="#45716d" stroke-width="0.6"/><line x1="183.0" y1="0" x2="183.8" y2="8.5" stroke="#45716d" stroke-width="0.6"/><line x1="184.6" y1="0" x2="185.4" y2="8.5" stroke="#45716d" stroke-width="0.6"/><line x1="186.2" y1="0" x2="187.0" y2="8.5" stroke="#45716d" stroke-width="0.6"/><line x1="187.8" y1="0" x2="188.6" y2="8.5" stroke="#45716d" stroke-width="0.6"/><line x1="189.4" y1="0" x2="190.2" y2="8.5" stroke="#45716d" stroke-width="0.6"/><line x1="191.0" y1="0" x2="191.8" y2="8.5" stroke="#45716d" stroke-width="0.6"/><line x1="192.6" y1="0" x2="193.4" y2="8.5" stroke="#45716d" stroke-width="0.6"/><line x1="194.2" y1="0" x2="195.0" y2="8.5" stroke="#45716d" stroke-width="0.6"/><line x1="195.8" y1="0" x2="196.6" y2="8.5" stroke="#45716d" stroke-width="0.6"/><line x1="215.0" y1="0" x2="215.8" y2="8.5" stroke="#45716d" stroke-width="0.6"/><line x1="216.6" y1="0" x2="217.4" y2="8.5" stroke="#45716d" stroke-width="0.6"/><line x1="218.2" y1="0" x2="219.0" y2="8.5" stroke="#45716d" stroke-width="0.6"/><line x1="219.8" y1="0" x2="220.6" y2="8.5" stroke="#45716d" stroke-width="0.6"/><line x1="221.4" y1="0" x2="222.2" y2="8.5" stroke="#45716d" stroke-width="0.6"/><line x1="223.0" y1="0" x2="223.8" y2="8.5" stroke="#45716d" stroke-width="0.6"/><line x1="224.6" y1="0" x2="225.4" y2="8.5" stroke="#45716d" stroke-width="0.6"/><line x1="226.2" y1="0" x2="227.0" y2="8.5" stroke="#45716d" stroke-width="0.6"/><line x1="227.8" y1="0" x2="228.6" y2="8.5" stroke="#45716d" stroke-width="0.6"/><line x1="229.4" y1="0" x2="230.2" y2="8.5" stroke="#45716d" stroke-width="0.6"/><line x1="231.0" y1="0" x2="231.8" y2="8.5" stroke="#45716d" stroke-width="0.6"/><line x1="232.6" y1="0" x2="233.4" y2="8.5" stroke="#45716d" stroke-width="0.6"/><line x1="234.2" y1="0" x2="235.0" y2="8.5" stroke="#45716d" stroke-width="0.6"/><line x1="235.8" y1="0" x2="236.6" y2="8.5" stroke="#45716d" stroke-width="0.6"/><line x1="237.4" y1="0" x2="238.2" y2="8.5" stroke="#45716d" stroke-width="0.6"/><line x1="239.0" y1="0" x2="239.8" y2="8.5" stroke="#45716d" stroke-width="0.6"/><line x1="240.6" y1="0" x2="241.4" y2="8.5" stroke="#45716d" stroke-width="0.6"/><line x1="242.2" y1="0" x2="243.0" y2="8.5" stroke="#45716d" stroke-width="0.6"/><line x1="243.8" y1="0" x2="244.6" y2="8.5" stroke="#45716d" stroke-width="0.6"/><line x1="245.4" y1="0" x2="246.2" y2="8.5" stroke="#45716d" stroke-width="0.6"/><line x1="247.0" y1="0" x2="247.8" y2="8.5" stroke="#45716d" stroke-width="0.6"/><line x1="248.6" y1="0" x2="249.4" y2="8.5" stroke="#45716d" stroke-width="0.6"/><line x1="250.2" y1="0" x2="251.0" y2="8.5" stroke="#45716d" stroke-width="0.6"/><line x1="251.8" y1="0" x2="252.6" y2="8.5" stroke="#45716d" stroke-width="0.6"/><path d="M114 10.5 A6 6 0 0 1 126 10.5" fill="none" stroke="#35605d" stroke-width="0.8"/><path d="M111 10.5 A9 9 0 0 1 129 10.5" fill="none" stroke="#35605d" stroke-width="0.8"/><path d="M108 10.5 A12 12 0 0 1 132 10.5" fill="none" stroke="#35605d" stroke-width="0.8"/><path d="M105 10.5 A15 15 0 0 1 135 10.5" fill="none" stroke="#35605d" stroke-width="0.8"/><path d="M154 10.5 A6 6 0 0 1 166 10.5" fill="none" stroke="#35605d" stroke-width="0.8"/><path d="M151 10.5 A9 9 0 0 1 169 10.5" fill="none" stroke="#35605d" stroke-width="0.8"/><path d="M148 10.5 A12 12 0 0 1 172 10.5" fill="none" stroke="#35605d" stroke-width="0.8"/><path d="M145 10.5 A15 15 0 0 1 175 10.5" fill="none" stroke="#35605d" stroke-width="0.8"/><path d="M197 0H215C215 5 211 6.375 206 6.375C201 6.375 197 5 197 0Z" fill="#9cc3c3"/><rect x="215" y="0" width="38" height="8.5" fill="#4f7c78"/><path d="M229 10.5 A6 6 0 0 1 241 10.5" fill="none" stroke="#35605d" stroke-width="0.8"/><path d="M226 10.5 A9 9 0 0 1 244 10.5" fill="none" stroke="#35605d" stroke-width="0.8"/><path d="M223 10.5 A12 12 0 0 1 247 10.5" fill="none" stroke="#35605d" stroke-width="0.8"/><path d="M220 10.5 A15 15 0 0 1 250 10.5" fill="none" stroke="#35605d" stroke-width="0.8"/><path d="M270.6 8.5 C272 3 280 3.5 290 4 C298 4.2 296 0.8 300 0.8 C304 0.8 306 5 307.2 8.5Z" fill="#e9c486"/><path d="M313.6 8.5 C314 3 322 2 323.5 8.5Z" fill="#30535a"/><polygon points="324,0 331.6,0 329.9,8.5 321.7,8.5" fill="#8db1ae"/><polygon points="331.6,0 342,0 343,8.5 329.9,8.5" fill="#30535a"/><polygon points="342,0 349.6,0 348,8.5 343,8.5" fill="#9abdba"/><polygon points="370,0 386,0 397.7,8.5 372.5,8.5" fill="#e3b063"/><line x1="386" y1="0" x2="398" y2="8.5" stroke="#4a7672" stroke-width="0.9"/><line x1="389" y1="0" x2="401" y2="8.5" stroke="#4a7672" stroke-width="0.9"/><line x1="392" y1="0" x2="404" y2="8.5" stroke="#4a7672" stroke-width="0.9"/><line x1="395" y1="0" x2="407" y2="8.5" stroke="#4a7672" stroke-width="0.9"/><line x1="398" y1="0" x2="410" y2="8.5" stroke="#4a7672" stroke-width="0.9"/><line x1="401" y1="0" x2="413" y2="8.5" stroke="#4a7672" stroke-width="0.9"/><line x1="404" y1="0" x2="416" y2="8.5" stroke="#4a7672" stroke-width="0.9"/><line x1="407" y1="0" x2="419" y2="8.5" stroke="#4a7672" stroke-width="0.9"/><line x1="410" y1="0" x2="422" y2="8.5" stroke="#4a7672" stroke-width="0.9"/><polygon points="416,0 418,0 413,8.5 410,8.5" fill="#e8be6a"/><polygon points="422,0 426,0 434,8.5 428,8.5" fill="#efc46a"/></g><g transform="translate(463 0)"><rect x="0" y="0" width="463" height="8.5" fill="#5b8884"/><polygon points="-16,0 9.6,0 12,8.5 -19,8.5" fill="#b9d3d4"/><polygon points="447,0 472.6,0 475,8.5 444,8.5" fill="#b9d3d4"/><polygon points="9.6,0 35,0 31.7,8.5 12,8.5" fill="#4f7b77"/><polygon points="35,0 38,0 34.7,8.5 31.7,8.5" fill="#e58d4c"/><polygon points="37,8.5 39,1 50,0.5 53,8.5" fill="#30535a"/><polygon points="73,0 95,0 95,8.5 68,8.5" fill="#86a9a6"/><line x1="73" y1="0" x2="70" y2="8.5" stroke="#5d8985" stroke-width="0.8"/><line x1="75" y1="0" x2="72" y2="8.5" stroke="#5d8985" stroke-width="0.8"/><line x1="77" y1="0" x2="74" y2="8.5" stroke="#5d8985" stroke-width="0.8"/><line x1="79" y1="0" x2="76" y2="8.5" stroke="#5d8985" stroke-width="0.8"/><line x1="81" y1="0" x2="78" y2="8.5" stroke="#5d8985" stroke-width="0.8"/><line x1="83" y1="0" x2="80" y2="8.5" stroke="#5d8985" stroke-width="0.8"/><line x1="85" y1="0" x2="82" y2="8.5" stroke="#5d8985" stroke-width="0.8"/><line x1="87" y1="0" x2="84" y2="8.5" stroke="#5d8985" stroke-width="0.8"/><line x1="89" y1="0" x2="86" y2="8.5" stroke="#5d8985" stroke-width="0.8"/><line x1="91" y1="0" x2="88" y2="8.5" stroke="#5d8985" stroke-width="0.8"/><line x1="93" y1="0" x2="90" y2="8.5" stroke="#5d8985" stroke-width="0.8"/><rect x="95" y="0" width="102" height="8.5" fill="#4f7c78"/><line x1="95.0" y1="0" x2="95.8" y2="8.5" stroke="#45716d" stroke-width="0.6"/><line x1="96.6" y1="0" x2="97.4" y2="8.5" stroke="#45716d" stroke-width="0.6"/><line x1="98.2" y1="0" x2="99.0" y2="8.5" stroke="#45716d" stroke-width="0.6"/><line x1="99.8" y1="0" x2="100.6" y2="8.5" stroke="#45716d" stroke-width="0.6"/><line x1="101.4" y1="0" x2="102.2" y2="8.5" stroke="#45716d" stroke-width="0.6"/><line x1="103.0" y1="0" x2="103.8" y2="8.5" stroke="#45716d" stroke-width="0.6"/><line x1="104.6" y1="0" x2="105.4" y2="8.5" stroke="#45716d" stroke-width="0.6"/><line x1="106.2" y1="0" x2="107.0" y2="8.5" stroke="#45716d" stroke-width="0.6"/><line x1="107.8" y1="0" x2="108.6" y2="8.5" stroke="#45716d" stroke-width="0.6"/><line x1="109.4" y1="0" x2="110.2" y2="8.5" stroke="#45716d" stroke-width="0.6"/><line x1="111.0" y1="0" x2="111.8" y2="8.5" stroke="#45716d" stroke-width="0.6"/><line x1="112.6" y1="0" x2="113.4" y2="8.5" stroke="#45716d" stroke-width="0.6"/><line x1="114.2" y1="0" x2="115.0" y2="8.5" stroke="#45716d" stroke-width="0.6"/><line x1="115.8" y1="0" x2="116.6" y2="8.5" stroke="#45716d" stroke-width="0.6"/><line x1="117.4" y1="0" x2="118.2" y2="8.5" stroke="#45716d" stroke-width="0.6"/><line x1="119.0" y1="0" x2="119.8" y2="8.5" stroke="#45716d" stroke-width="0.6"/><line x1="120.6" y1="0" x2="121.4" y2="8.5" stroke="#45716d" stroke-width="0.6"/><line x1="122.2" y1="0" x2="123.0" y2="8.5" stroke="#45716d" stroke-width="0.6"/><line x1="123.8" y1="0" x2="124.6" y2="8.5" stroke="#45716d" stroke-width="0.6"/><line x1="125.4" y1="0" x2="126.2" y2="8.5" stroke="#45716d" stroke-width="0.6"/><line x1="127.0" y1="0" x2="127.8" y2="8.5" stroke="#45716d" stroke-width="0.6"/><line x1="128.6" y1="0" x2="129.4" y2="8.5" stroke="#45716d" stroke-width="0.6"/><line x1="130.2" y1="0" x2="131.0" y2="8.5" stroke="#45716d" stroke-width="0.6"/><line x1="131.8" y1="0" x2="132.6" y2="8.5" stroke="#45716d" stroke-width="0.6"/><line x1="133.4" y1="0" x2="134.2" y2="8.5" stroke="#45716d" stroke-width="0.6"/><line x1="135.0" y1="0" x2="135.8" y2="8.5" stroke="#45716d" stroke-width="0.6"/><line x1="136.6" y1="0" x2="137.4" y2="8.5" stroke="#45716d" stroke-width="0.6"/><line x1="138.2" y1="0" x2="139.0" y2="8.5" stroke="#45716d" stroke-width="0.6"/><line x1="139.8" y1="0" x2="140.6" y2="8.5" stroke="#45716d" stroke-width="0.6"/><line x1="141.4" y1="0" x2="142.2" y2="8.5" stroke="#45716d" stroke-width="0.6"/><line x1="143.0" y1="0" x2="143.8" y2="8.5" stroke="#45716d" stroke-width="0.6"/><line x1="144.6" y1="0" x2="145.4" y2="8.5" stroke="#45716d" stroke-width="0.6"/><line x1="146.2" y1="0" x2="147.0" y2="8.5" stroke="#45716d" stroke-width="0.6"/><line x1="147.8" y1="0" x2="148.6" y2="8.5" stroke="#45716d" stroke-width="0.6"/><line x1="149.4" y1="0" x2="150.2" y2="8.5" stroke="#45716d" stroke-width="0.6"/><line x1="151.0" y1="0" x2="151.8" y2="8.5" stroke="#45716d" stroke-width="0.6"/><line x1="152.6" y1="0" x2="153.4" y2="8.5" stroke="#45716d" stroke-width="0.6"/><line x1="154.2" y1="0" x2="155.0" y2="8.5" stroke="#45716d" stroke-width="0.6"/><line x1="155.8" y1="0" x2="156.6" y2="8.5" stroke="#45716d" stroke-width="0.6"/><line x1="157.4" y1="0" x2="158.2" y2="8.5" stroke="#45716d" stroke-width="0.6"/><line x1="159.0" y1="0" x2="159.8" y2="8.5" stroke="#45716d" stroke-width="0.6"/><line x1="160.6" y1="0" x2="161.4" y2="8.5" stroke="#45716d" stroke-width="0.6"/><line x1="162.2" y1="0" x2="163.0" y2="8.5" stroke="#45716d" stroke-width="0.6"/><line x1="163.8" y1="0" x2="164.6" y2="8.5" stroke="#45716d" stroke-width="0.6"/><line x1="165.4" y1="0" x2="166.2" y2="8.5" stroke="#45716d" stroke-width="0.6"/><line x1="167.0" y1="0" x2="167.8" y2="8.5" stroke="#45716d" stroke-width="0.6"/><line x1="168.6" y1="0" x2="169.4" y2="8.5" stroke="#45716d" stroke-width="0.6"/><line x1="170.2" y1="0" x2="171.0" y2="8.5" stroke="#45716d" stroke-width="0.6"/><line x1="171.8" y1="0" x2="172.6" y2="8.5" stroke="#45716d" stroke-width="0.6"/><line x1="173.4" y1="0" x2="174.2" y2="8.5" stroke="#45716d" stroke-width="0.6"/><line x1="175.0" y1="0" x2="175.8" y2="8.5" stroke="#45716d" stroke-width="0.6"/><line x1="176.6" y1="0" x2="177.4" y2="8.5" stroke="#45716d" stroke-width="0.6"/><line x1="178.2" y1="0" x2="179.0" y2="8.5" stroke="#45716d" stroke-width="0.6"/><line x1="179.8" y1="0" x2="180.6" y2="8.5" stroke="#45716d" stroke-width="0.6"/><line x1="181.4" y1="0" x2="182.2" y2="8.5" stroke="#45716d" stroke-width="0.6"/><line x1="183.0" y1="0" x2="183.8" y2="8.5" stroke="#45716d" stroke-width="0.6"/><line x1="184.6" y1="0" x2="185.4" y2="8.5" stroke="#45716d" stroke-width="0.6"/><line x1="186.2" y1="0" x2="187.0" y2="8.5" stroke="#45716d" stroke-width="0.6"/><line x1="187.8" y1="0" x2="188.6" y2="8.5" stroke="#45716d" stroke-width="0.6"/><line x1="189.4" y1="0" x2="190.2" y2="8.5" stroke="#45716d" stroke-width="0.6"/><line x1="191.0" y1="0" x2="191.8" y2="8.5" stroke="#45716d" stroke-width="0.6"/><line x1="192.6" y1="0" x2="193.4" y2="8.5" stroke="#45716d" stroke-width="0.6"/><line x1="194.2" y1="0" x2="195.0" y2="8.5" stroke="#45716d" stroke-width="0.6"/><line x1="195.8" y1="0" x2="196.6" y2="8.5" stroke="#45716d" stroke-width="0.6"/><line x1="215.0" y1="0" x2="215.8" y2="8.5" stroke="#45716d" stroke-width="0.6"/><line x1="216.6" y1="0" x2="217.4" y2="8.5" stroke="#45716d" stroke-width="0.6"/><line x1="218.2" y1="0" x2="219.0" y2="8.5" stroke="#45716d" stroke-width="0.6"/><line x1="219.8" y1="0" x2="220.6" y2="8.5" stroke="#45716d" stroke-width="0.6"/><line x1="221.4" y1="0" x2="222.2" y2="8.5" stroke="#45716d" stroke-width="0.6"/><line x1="223.0" y1="0" x2="223.8" y2="8.5" stroke="#45716d" stroke-width="0.6"/><line x1="224.6" y1="0" x2="225.4" y2="8.5" stroke="#45716d" stroke-width="0.6"/><line x1="226.2" y1="0" x2="227.0" y2="8.5" stroke="#45716d" stroke-width="0.6"/><line x1="227.8" y1="0" x2="228.6" y2="8.5" stroke="#45716d" stroke-width="0.6"/><line x1="229.4" y1="0" x2="230.2" y2="8.5" stroke="#45716d" stroke-width="0.6"/><line x1="231.0" y1="0" x2="231.8" y2="8.5" stroke="#45716d" stroke-width="0.6"/><line x1="232.6" y1="0" x2="233.4" y2="8.5" stroke="#45716d" stroke-width="0.6"/><line x1="234.2" y1="0" x2="235.0" y2="8.5" stroke="#45716d" stroke-width="0.6"/><line x1="235.8" y1="0" x2="236.6" y2="8.5" stroke="#45716d" stroke-width="0.6"/><line x1="237.4" y1="0" x2="238.2" y2="8.5" stroke="#45716d" stroke-width="0.6"/><line x1="239.0" y1="0" x2="239.8" y2="8.5" stroke="#45716d" stroke-width="0.6"/><line x1="240.6" y1="0" x2="241.4" y2="8.5" stroke="#45716d" stroke-width="0.6"/><line x1="242.2" y1="0" x2="243.0" y2="8.5" stroke="#45716d" stroke-width="0.6"/><line x1="243.8" y1="0" x2="244.6" y2="8.5" stroke="#45716d" stroke-width="0.6"/><line x1="245.4" y1="0" x2="246.2" y2="8.5" stroke="#45716d" stroke-width="0.6"/><line x1="247.0" y1="0" x2="247.8" y2="8.5" stroke="#45716d" stroke-width="0.6"/><line x1="248.6" y1="0" x2="249.4" y2="8.5" stroke="#45716d" stroke-width="0.6"/><line x1="250.2" y1="0" x2="251.0" y2="8.5" stroke="#45716d" stroke-width="0.6"/><line x1="251.8" y1="0" x2="252.6" y2="8.5" stroke="#45716d" stroke-width="0.6"/><path d="M114 10.5 A6 6 0 0 1 126 10.5" fill="none" stroke="#35605d" stroke-width="0.8"/><path d="M111 10.5 A9 9 0 0 1 129 10.5" fill="none" stroke="#35605d" stroke-width="0.8"/><path d="M108 10.5 A12 12 0 0 1 132 10.5" fill="none" stroke="#35605d" stroke-width="0.8"/><path d="M105 10.5 A15 15 0 0 1 135 10.5" fill="none" stroke="#35605d" stroke-width="0.8"/><path d="M154 10.5 A6 6 0 0 1 166 10.5" fill="none" stroke="#35605d" stroke-width="0.8"/><path d="M151 10.5 A9 9 0 0 1 169 10.5" fill="none" stroke="#35605d" stroke-width="0.8"/><path d="M148 10.5 A12 12 0 0 1 172 10.5" fill="none" stroke="#35605d" stroke-width="0.8"/><path d="M145 10.5 A15 15 0 0 1 175 10.5" fill="none" stroke="#35605d" stroke-width="0.8"/><path d="M197 0H215C215 5 211 6.375 206 6.375C201 6.375 197 5 197 0Z" fill="#9cc3c3"/><rect x="215" y="0" width="38" height="8.5" fill="#4f7c78"/><path d="M229 10.5 A6 6 0 0 1 241 10.5" fill="none" stroke="#35605d" stroke-width="0.8"/><path d="M226 10.5 A9 9 0 0 1 244 10.5" fill="none" stroke="#35605d" stroke-width="0.8"/><path d="M223 10.5 A12 12 0 0 1 247 10.5" fill="none" stroke="#35605d" stroke-width="0.8"/><path d="M220 10.5 A15 15 0 0 1 250 10.5" fill="none" stroke="#35605d" stroke-width="0.8"/><path d="M270.6 8.5 C272 3 280 3.5 290 4 C298 4.2 296 0.8 300 0.8 C304 0.8 306 5 307.2 8.5Z" fill="#e9c486"/><path d="M313.6 8.5 C314 3 322 2 323.5 8.5Z" fill="#30535a"/><polygon points="324,0 331.6,0 329.9,8.5 321.7,8.5" fill="#8db1ae"/><polygon points="331.6,0 342,0 343,8.5 329.9,8.5" fill="#30535a"/><polygon points="342,0 349.6,0 348,8.5 343,8.5" fill="#9abdba"/><polygon points="370,0 386,0 397.7,8.5 372.5,8.5" fill="#e3b063"/><line x1="386" y1="0" x2="398" y2="8.5" stroke="#4a7672" stroke-width="0.9"/><line x1="389" y1="0" x2="401" y2="8.5" stroke="#4a7672" stroke-width="0.9"/><line x1="392" y1="0" x2="404" y2="8.5" stroke="#4a7672" stroke-width="0.9"/><line x1="395" y1="0" x2="407" y2="8.5" stroke="#4a7672" stroke-width="0.9"/><line x1="398" y1="0" x2="410" y2="8.5" stroke="#4a7672" stroke-width="0.9"/><line x1="401" y1="0" x2="413" y2="8.5" stroke="#4a7672" stroke-width="0.9"/><line x1="404" y1="0" x2="416" y2="8.5" stroke="#4a7672" stroke-width="0.9"/><line x1="407" y1="0" x2="419" y2="8.5" stroke="#4a7672" stroke-width="0.9"/><line x1="410" y1="0" x2="422" y2="8.5" stroke="#4a7672" stroke-width="0.9"/><polygon points="416,0 418,0 413,8.5 410,8.5" fill="#e8be6a"/><polygon points="422,0 426,0 434,8.5 428,8.5" fill="#efc46a"/></g></svg></div>
<div class="btn" style="left:99px;top:134px;width:51px;height:24px"></div>
<svg class="a" style="left:105px;top:140px" width="11" height="11" viewBox="0 0 11 11"><path d="M5.5 0V11M0 5.5H11" stroke="#161513" stroke-width="1.2"/></svg>
<div class="t h" style="left:122.4px;top:140.31px;font-size:10.5px;letter-spacing:-1.3px">Add</div>
<div class="btn" style="left:918px;top:134px;width:23px;height:23px"></div>
<svg class="a" style="left:924px;top:140px" width="11" height="11" viewBox="0 0 11 11"><path d="M0.65 0.65H10.35V10.35H0.65ZM5.5 0.65V10.35" fill="none" stroke="#161513" stroke-width="1.3"/></svg>
<div class="t h" style="left:99.5px;top:171.69px">Exception</div><svg class="sort" style="left:153.5px;top:172.5px" viewBox="0 0 7 9"><path d="M1 3.3L3.5 0.9L6 3.3M1 5.7L3.5 8.1L6 5.7" fill="none" stroke="#161513" stroke-width="1.1"/></svg>
<div class="t h" style="left:280.7px;top:171.69px">Display Name</div><svg class="sort" style="left:353.8px;top:172.3px" viewBox="0 0 7 9"><path d="M1 3.3L3.5 0.9L6 3.3M1 5.7L3.5 8.1L6 5.7" fill="none" stroke="#161513" stroke-width="1.1"/></svg>
<div class="t h" style="left:461.7px;top:171.69px;width:15px;overflow:hidden">Basis</div><svg class="sort" style="left:484.5px;top:172.3px" viewBox="0 0 7 9"><path d="M1 3.3L3.5 0.9L6 3.3M1 5.7L3.5 8.1L6 5.7" fill="none" stroke="#161513" stroke-width="1.1"/></svg>
<div class="t h" style="left:515.6px;top:171.69px">Group</div>
<div class="t h" style="left:677.7px;top:164.89px">Last</div><div class="t h" style="left:677.7px;top:178.09px;letter-spacing:-0.35px">Updated...</div><svg class="sort" style="left:736.5px;top:172.7px" viewBox="0 0 7 9"><path d="M1 3.3L3.5 0.9L6 3.3M1 5.7L3.5 8.1L6 5.7" fill="none" stroke="#161513" stroke-width="1.1"/></svg>
<div class="t h" style="left:767.8px;top:164.89px">Last</div><div class="t h" style="left:767.8px;top:178.09px;letter-spacing:-0.35px">Updated...</div><svg class="sort" style="left:827.3px;top:172.7px" viewBox="0 0 7 9"><path d="M1 3.3L3.5 0.9L6 3.3M1 5.7L3.5 8.1L6 5.7" fill="none" stroke="#161513" stroke-width="1.1"/></svg>
<div class="t h" style="left:858.6px;top:171.69px">Notes</div>
<div class="t h" style="left:909.7px;top:171.69px">Action</div>
<div class="a" style="left:969px;top:168px;width:1px;height:100px;background:#d6d3cf"></div>
<svg class="a" style="left:0;top:0" width="1033" height="445" viewBox="0 0 1033 445"><path d="M67 193.50H970M67 224.35H970M67 255.20H970M67 286.05H970M67 316.90H970M67 347.75H970M67 378.60H970" stroke="#e3e0dc" stroke-width="1"/></svg>
<div class="t d" style="left:99.5px;top:204.19px">AI_Exception_Type</div>
<div class="t d" style="left:280.7px;top:204.19px">AI_Exception_Type</div>
<div class="t d" style="left:461.7px;top:204.19px">Mea...</div>
<div class="t d" style="left:515.6px;top:204.19px">Supply Planning Exceptions</div>
<div class="t d" style="left:677.5px;top:204.19px;letter-spacing:-1.3px">SCP_SP_USER</div>
<div class="t d" style="left:767.8px;top:196.99px;letter-spacing:0.4px">5/12/25 7:31</div>
<div class="t d" style="left:767.8px;top:209.79px;letter-spacing:0.1px">AM</div>
<svg class="dots" style="left:919px;top:207.0px" viewBox="0 0 12 3"><circle cx="1.6" cy="1.5" r="1.15" fill="#22201d"/><circle cx="6" cy="1.5" r="1.15" fill="#22201d"/><circle cx="10.4" cy="1.5" r="1.15" fill="#22201d"/></svg>
<div class="t d" style="left:99.5px;top:235.04px">DEMO:5 Percent revenue at risk</div>
<div class="t d" style="left:280.7px;top:235.04px">DEMO:5 Percent revenue at risk</div>
<div class="t d" style="left:461.7px;top:235.04px">Mea...</div>
<div class="t d" style="left:515.6px;top:235.04px">Supply Planning Exceptions</div>
<div class="t d" style="left:677.5px;top:235.04px;letter-spacing:-1.3px">SCP_SP_USER</div>
<div class="t d" style="left:767.8px;top:227.84px;letter-spacing:0.4px">12/19/25</div>
<div class="t d" style="left:767.8px;top:240.64px;letter-spacing:0.1px">7:34 AM</div>
<svg class="dots" style="left:919px;top:237.8px" viewBox="0 0 12 3"><circle cx="1.6" cy="1.5" r="1.15" fill="#22201d"/><circle cx="6" cy="1.5" r="1.15" fill="#22201d"/><circle cx="10.4" cy="1.5" r="1.15" fill="#22201d"/></svg>
<div class="t d" style="left:99.5px;top:265.89px">Demand Quantity Not Satisfied</div>
<div class="t d" style="left:280.7px;top:265.89px">Demand Quantity Not Satisfied</div>
<div class="t d" style="left:461.7px;top:265.89px">Order</div>
<div class="t d" style="left:515.6px;top:265.89px">Supply Planning Exceptions</div>
<div class="t d" style="left:677.5px;top:265.89px;letter-spacing:-0.6px">SEED_DATA...</div>
<div class="t d" style="left:767.8px;top:258.69px;letter-spacing:0.4px">6/24/25</div>
<div class="t d" style="left:767.8px;top:271.49px;letter-spacing:0.1px">10:58 AM</div>
<div class="a" style="left:913px;top:258.7px;width:23px;height:23px;background:#dcdad7;border-radius:3px"></div>
<svg class="dots" style="left:919px;top:268.7px" viewBox="0 0 12 3"><circle cx="1.6" cy="1.5" r="1.15" fill="#22201d"/><circle cx="6" cy="1.5" r="1.15" fill="#22201d"/><circle cx="10.4" cy="1.5" r="1.15" fill="#22201d"/></svg>
<div class="t d" style="left:99.5px;top:296.74px">Demand at Risk Due to Insuffici...</div>
<div class="t d" style="left:280.7px;top:296.74px">Demand at Risk Due to Insuffici...</div>
<div class="t d" style="left:461.7px;top:296.74px">Order</div>
<div class="t d" style="left:515.6px;top:296.74px">Supply Planning Exceptions</div>
<div class="t d" style="left:677.5px;top:296.74px;letter-spacing:-0.6px">SEED_DATA...</div>
<div class="t d" style="left:767.8px;top:289.54px;letter-spacing:0.4px">6/24/25</div>
<div class="t d" style="left:767.8px;top:302.34px;letter-spacing:0.1px">10:58 AM</div>
<svg class="dots" style="left:919px;top:299.6px" viewBox="0 0 12 3"><circle cx="1.6" cy="1.5" r="1.15" fill="#22201d"/><circle cx="6" cy="1.5" r="1.15" fill="#22201d"/><circle cx="10.4" cy="1.5" r="1.15" fill="#22201d"/></svg>
<div class="t d" style="left:99.5px;top:327.59px">Demand at Risk Due to Insuffici...</div>
<div class="t d" style="left:280.7px;top:327.59px">Demand at Risk Due to Insuffici...</div>
<div class="t d" style="left:461.7px;top:327.59px">Order</div>
<div class="t d" style="left:515.6px;top:327.59px">Supply Planning Exceptions</div>
<div class="t d" style="left:677.5px;top:327.59px;letter-spacing:-0.6px">SEED_DATA...</div>
<div class="t d" style="left:767.8px;top:320.39px;letter-spacing:0.4px">6/24/25</div>
<div class="t d" style="left:767.8px;top:333.19px;letter-spacing:0.1px">10:58 AM</div>
<svg class="dots" style="left:919px;top:330.4px" viewBox="0 0 12 3"><circle cx="1.6" cy="1.5" r="1.15" fill="#22201d"/><circle cx="6" cy="1.5" r="1.15" fill="#22201d"/><circle cx="10.4" cy="1.5" r="1.15" fill="#22201d"/></svg>
<div class="t d" style="left:99.5px;top:358.44px">Demand at Risk Due to Resourc...</div>
<div class="t d" style="left:280.7px;top:358.44px">Demand at Risk Due to Resourc...</div>
<div class="t d" style="left:461.7px;top:358.44px">Order</div>
<div class="t d" style="left:515.6px;top:358.44px">Supply Planning Exceptions</div>
<div class="t d" style="left:677.5px;top:358.44px;letter-spacing:-0.6px">SEED_DATA...</div>
<div class="t d" style="left:767.8px;top:351.24px;letter-spacing:0.4px">6/24/25</div>
<div class="t d" style="left:767.8px;top:364.04px;letter-spacing:0.1px">10:58 AM</div>
<svg class="dots" style="left:919px;top:361.2px" viewBox="0 0 12 3"><circle cx="1.6" cy="1.5" r="1.15" fill="#22201d"/><circle cx="6" cy="1.5" r="1.15" fill="#22201d"/><circle cx="10.4" cy="1.5" r="1.15" fill="#22201d"/></svg>
<div class="t d" style="left:99.5px;top:389.29px">Demand at Risk Due to Supplier...</div>
<div class="t d" style="left:280.7px;top:389.29px">Demand at Risk Due to Supplier...</div>
<div class="t d" style="left:461.7px;top:389.29px">Order</div>
<div class="t d" style="left:515.6px;top:389.29px">Supply Planning Exceptions</div>
<div class="t d" style="left:677.5px;top:389.29px;letter-spacing:-0.6px">SEED_DATA...</div>
<div class="t d" style="left:767.8px;top:382.09px;letter-spacing:0.4px">6/24/25</div>
<div class="t d" style="left:767.8px;top:394.89px;letter-spacing:0.1px">10:58 AM</div>
<svg class="dots" style="left:919px;top:392.1px" viewBox="0 0 12 3"><circle cx="1.6" cy="1.5" r="1.15" fill="#22201d"/><circle cx="6" cy="1.5" r="1.15" fill="#22201d"/><circle cx="10.4" cy="1.5" r="1.15" fill="#22201d"/></svg>
<div class="a" style="left:914px;top:285px;width:89px;height:103px;background:#fff;border-radius:4px;box-shadow:0 1px 5px rgba(0,0,0,.16)"></div>
<div class="a" style="left:909px;top:291px;width:95px;height:24px;border:1.2px solid #f00"></div>
<svg class="a" style="left:924px;top:299px" width="13" height="13" viewBox="0 0 13 13"><path d="M2.2 11.3L1.6 9.3L9.4 1.5L11.4 3.5L3.6 11.3Z M8.3 2.6L10.3 4.6" fill="none" stroke="#161513" stroke-width="1.1" stroke-linejoin="round"/></svg>
<svg class="a" style="left:924px;top:330px" width="13" height="13" viewBox="0 0 13 13"><path d="M1.2 4.2H12M4.5 4.2V2.2H8.5V4.2M2.4 4.2V11.8H10.6V4.2M5.3 6.3V9.8M7.7 6.3V9.8" fill="none" stroke="#b8b5b2" stroke-width="1.1"/></svg>
<svg class="a" style="left:924px;top:361px" width="13" height="13" viewBox="0 0 13 13"><path d="M8.8 1.2H1.6V9.4M5.2 5H12.2V11.8H5.2Z" fill="none" stroke="#b8b5b2" stroke-width="1.1"/></svg>
<div class="t d" style="left:947.7px;top:300.59px;color:#161513">Edit</div>
<div class="t d" style="left:947.7px;top:331.59px;color:#b8b5b2">Delete</div>
<div class="t d" style="left:947.7px;top:362.59px;color:#b8b5b2">Copy</div>
</body></html>
